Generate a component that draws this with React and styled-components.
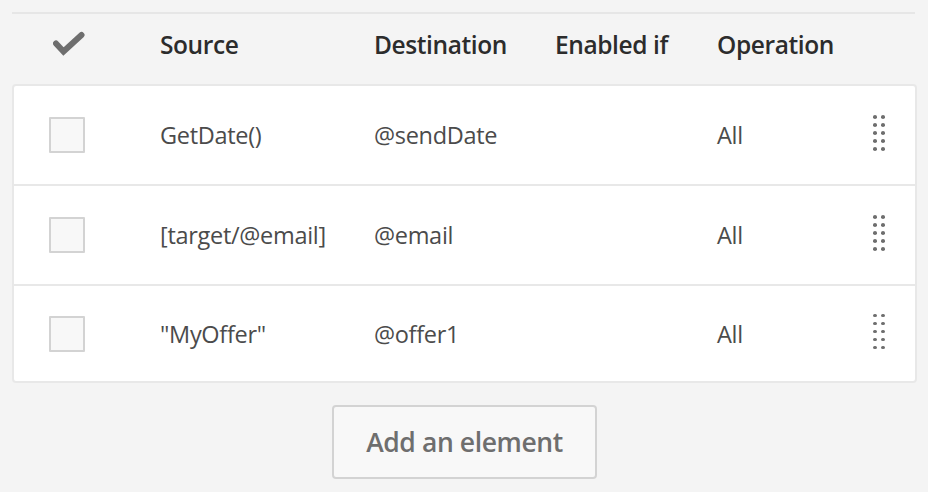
import React from 'react';
import styled, { createGlobalStyle } from 'styled-components';

const GlobalStyle = createGlobalStyle`
  body {
    margin: 0;
    background: #f4f4f4;
    font-family: "Open Sans", "Noto Sans", sans-serif;
  }
`;

const headerColumns = '148px 214px 181px 162px 1fr 72px';
const rowColumns = '146px 214px 181px 162px 1fr 72px';

const Page = styled.div`
  padding: 12px 11px 0 12px;
  display: flex;
  flex-direction: column;
`;

const HeaderRow = styled.div`
  display: grid;
  grid-template-columns: ${headerColumns};
  align-items: center;
  height: 60px;
  padding-bottom: 10px;
  border-top: 2px solid #e6e6e6;
  margin-right: 2px;
`;

const HeaderCell = styled.div`
  font-size: 24.5px;
  font-weight: 600;
  color: #2c2c2c;
  letter-spacing: -0.4px;
`;

const CheckCell = styled.div`
  display: flex;
  justify-content: center;
  padding-right: ${(p) => p.$pad || 38}px;
`;

const Card = styled.div`
  background: #fff;
  border: 2px solid #e8e8e8;
  border-radius: 4px;
`;

const Row = styled.div`
  display: grid;
  grid-template-columns: ${rowColumns};
  align-items: center;
  height: 98px;
  & + & {
    border-top: 2px solid #e8e8e8;
  }
  &:last-child {
    height: 95px;
  }
`;

const Cell = styled.div`
  font-size: 23.5px;
  color: #4b4b4b;
  letter-spacing: -0.3px;
`;

const Checkbox = styled.span`
  width: 32px;
  height: 32px;
  border: 2px solid #d3d3d3;
  background: #f8f8f8;
  border-radius: 1px;
`;

const Handle = styled.div`
  display: grid;
  grid-template-columns: repeat(2, 4px);
  grid-auto-rows: 3.5px;
  column-gap: 4px;
  row-gap: 4.5px;
  margin-left: 30px;
  margin-top: -4px;
`;

const Dot = styled.span`
  width: 4px;
  height: 3.5px;
  border-radius: 50%;
  background: #6e6e6e;
`;

const Footer = styled.div`
  display: flex;
  justify-content: center;
  padding-top: 22px;
`;

const Button = styled.button`
  width: 265px;
  height: 74px;
  background: #f8f8f8;
  border: 2px solid #d3d3d3;
  border-radius: 4px;
  font-family: inherit;
  font-size: 26.5px;
  font-weight: 600;
  color: #6e6e6e;
  letter-spacing: -0.4px;
`;

const CheckIcon = () => (
  <svg width="32" height="26" viewBox="0 0 32 26">
    <path d="M3 12.5 L10.5 20.5 L28.5 4" fill="none" stroke="#6e6e6e" strokeWidth="6" strokeLinecap="round" strokeLinejoin="miter" />
  </svg>
);

const rows = [
  { source: 'GetDate()', destination: '@sendDate', operation: 'All' },
  { source: '[target/@email]', destination: '@email', operation: 'All' },
  { source: '"MyOffer"', destination: '@offer1', operation: 'All' },
];

const DragHandle = () => (
  <Handle>
    {Array.from({ length: 10 }).map((_, i) => <Dot key={i} />)}
  </Handle>
);

const App = () => (
  <>
    <GlobalStyle />
    <Page>
      <HeaderRow>
        <CheckCell $pad={34}><CheckIcon /></CheckCell>
        <HeaderCell>Source</HeaderCell>
        <HeaderCell>Destination</HeaderCell>
        <HeaderCell>Enabled if</HeaderCell>
        <HeaderCell>Operation</HeaderCell>
        <div />
      </HeaderRow>
      <Card>
        {rows.map((r) => (
          <Row key={r.source}>
            <CheckCell $pad={40}><Checkbox /></CheckCell>
            <Cell>{r.source}</Cell>
            <Cell>{r.destination}</Cell>
            <Cell />
            <Cell>{r.operation}</Cell>
            <DragHandle />
          </Row>
        ))}
      </Card>
      <Footer>
        <Button>Add an element</Button>
      </Footer>
    </Page>
  </>
);

export default App;
